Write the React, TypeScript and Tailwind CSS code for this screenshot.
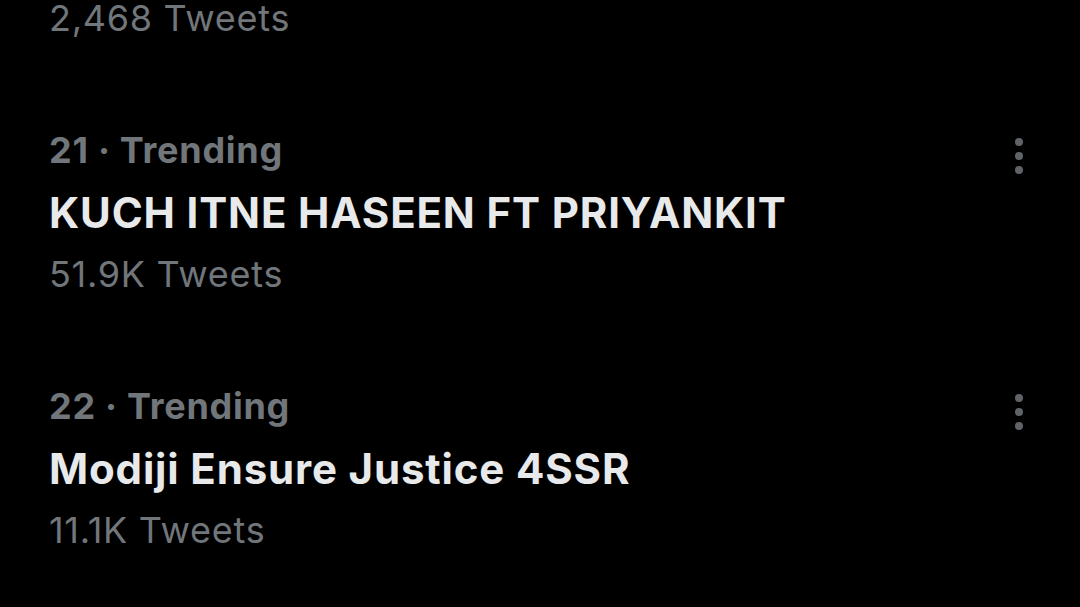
const TRENDS = [
  { rank: 21, title: "KUCH ITNE HASEEN FT PRIYANKIT", count: "51.9K" },
  { rank: 22, title: "Modiji Ensure Justice 4SSR", count: "11.1K" },
];

function MoreIcon() {
  return (
    <svg width="10" height="38" viewBox="0 0 10 38" className="text-[#606468]" fill="currentColor">
      <circle cx="5" cy="5" r="4" />
      <circle cx="5" cy="19" r="4" />
      <circle cx="5" cy="33" r="4" />
    </svg>
  );
}

export default function App() {
  return (
    <div
      className="w-[1080px] h-[607px] overflow-hidden bg-black pl-[49px]"
      style={{ fontFamily: 'Inter, "Liberation Sans", Arial, sans-serif' }}
    >
      <div className="-mt-[13px] flex flex-col gap-[70px]">
        <div className="h-[62px] flex items-center text-[36px] tracking-[0.02em] text-[#71767b]">
          2,468 Tweets
        </div>
        {TRENDS.map((t) => (
          <div key={t.rank} className="flex">
            <div className="flex-1 flex flex-col">
              <div className="h-[62px] flex items-center text-[36px] font-bold tracking-[0.02em] text-[#71767b]">
                {t.rank} · Trending
              </div>
              <div className="h-[62px] flex items-center text-[42px] font-bold tracking-[0.02em] text-[#e7e9ea]">
                {t.title}
              </div>
              <div className="h-[62px] flex items-center text-[36px] tracking-[0.02em] text-[#71767b]">
                {t.count} Tweets
              </div>
            </div>
            <div className="w-[66px] pt-[18px] flex">
              <MoreIcon />
            </div>
          </div>
        ))}
      </div>
    </div>
  );
}
